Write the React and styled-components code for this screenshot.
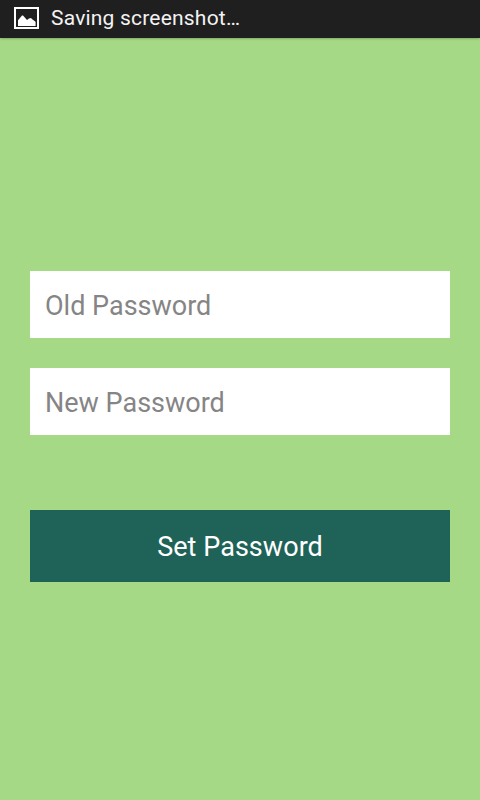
import React from "react";
import styled, { createGlobalStyle } from "styled-components";

const GlobalStyle = createGlobalStyle`
  * { box-sizing: border-box; }
  body { margin: 0; background: #a6d985; font-family: Roboto, sans-serif; }
`;

const Screen = styled.div`
  display: flex;
  flex-direction: column;
  width: 480px;
  height: 800px;
  background: #a6d985;
`;

const StatusBar = styled.header`
  display: flex;
  align-items: center;
  gap: 12px;
  height: 38px;
  flex: none;
  padding: 0 14px 2px;
  background: #1f1f1f;
  color: #f3f3f3;
  font-size: 21px;
  box-shadow: 0 0 3px rgba(0, 0, 0, 0.4);
`;

const StatusText = styled.span`
  letter-spacing: 0.2px;
`;

const Form = styled.main`
  display: flex;
  flex-direction: column;
  gap: 30px;
  padding: 233px 30px 0;
`;

const Field = styled.input`
  height: 67px;
  width: 100%;
  border: 0;
  border-radius: 0;
  padding: 3px 15px 0;
  background: #fff;
  font: 27px Roboto, sans-serif;
  outline: none;
  &::placeholder { color: #858585; opacity: 1; }
`;

const SubmitButton = styled.button`
  height: 72px;
  margin-top: 45px;
  border: 0;
  padding: 2px 0 0;
  background: #1f6358;
  color: #fff;
  font: 27px Roboto, sans-serif;
  letter-spacing: 0.05px;
`;

const PictureIcon = () => (
  <svg width="25" height="22" viewBox="0 0 25 22" fill="none">
    <rect x="1" y="1" width="23" height="20" stroke="#fff" strokeWidth="2" />
    <path d="M4 19V13.2L8 8.5H9L13 13L15 11.5L17 11L18.2 12.2L21.6 14.8V19Z" fill="#fff" />
  </svg>
);

export default function App() {
  return (
    <Screen>
      <GlobalStyle />
      <StatusBar>
        <PictureIcon />
        <StatusText>Saving screenshot…</StatusText>
      </StatusBar>
      <Form>
        <Field placeholder="Old Password" />
        <Field placeholder="New Password" />
        <SubmitButton>Set Password</SubmitButton>
      </Form>
    </Screen>
  );
}
